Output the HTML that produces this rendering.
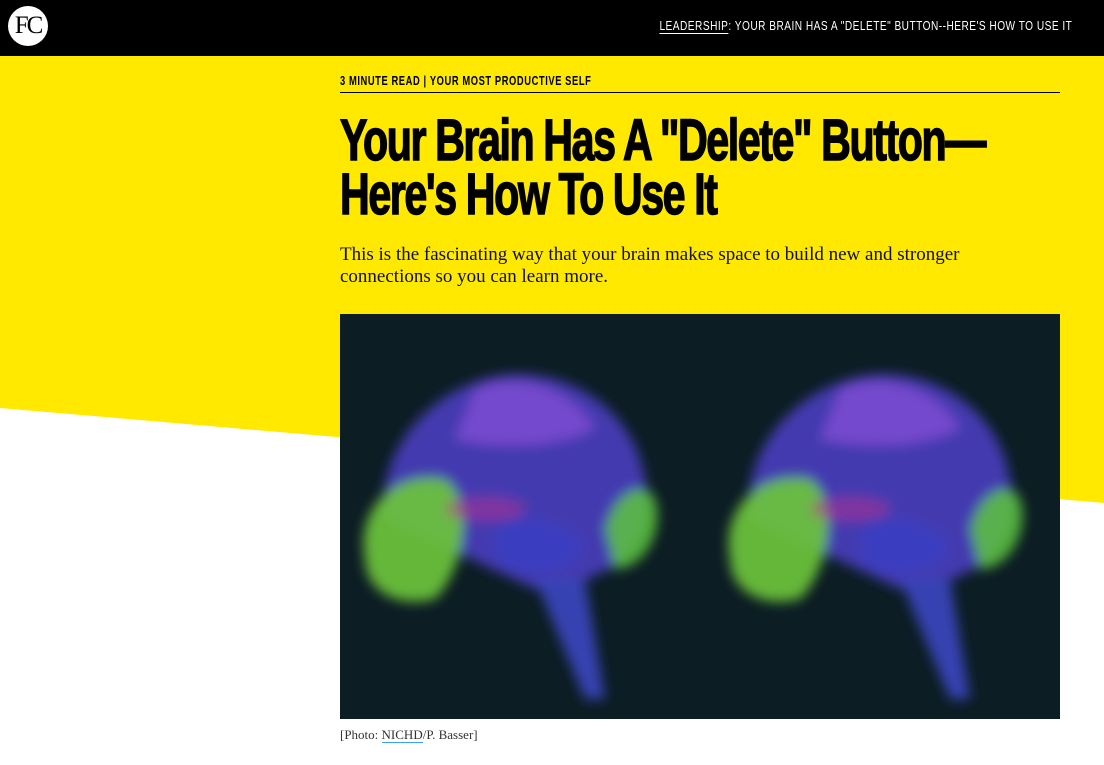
<!DOCTYPE html>
<html><head><meta charset="utf-8"><style>
body{margin:0;width:1104px;height:765px;position:relative;overflow:hidden;background:#fff;font-family:"Liberation Sans",sans-serif}
.top{position:absolute;left:0;top:0;width:1104px;height:56px;background:#000}
.logo{position:absolute;left:8px;top:6px;width:40px;height:40px;border-radius:50%;background:#fff;color:#000;font-family:"Liberation Serif",serif;font-size:25px;line-height:40px;text-align:center;letter-spacing:-2px}
.nav{position:absolute;right:32px;top:18px;color:#fff;font-size:13px;letter-spacing:.6px;transform:scaleX(.78);transform-origin:right top;white-space:nowrap}
.nav u{text-underline-offset:3px}
.yellow{position:absolute;left:0;top:56px;width:1104px;height:460px;background:#ffe900;clip-path:polygon(0 0,100% 0,100% 447px,0 352px)}
.kick{position:absolute;left:340px;top:73px;width:720px;height:19px;border-bottom:1px solid #000;font-size:13px;font-weight:bold;letter-spacing:.8px}
.kick span{display:inline-block;transform:scaleX(.72);transform-origin:left top;white-space:nowrap}
h1{position:absolute;left:340px;top:114px;margin:0;font-size:58px;line-height:54px;font-weight:bold;letter-spacing:-2px;transform:scaleX(.71);transform-origin:left top;white-space:nowrap;-webkit-text-stroke:1.5px #000}
.dek{position:absolute;left:340px;top:244px;font-family:"Liberation Serif",serif;font-size:19px;line-height:22px;color:#111;width:700px}
.img{position:absolute;left:340px;top:314px;width:720px;height:405px;background:#0c1d24;overflow:hidden}
.cap{position:absolute;left:340px;top:727px;font-family:"Liberation Serif",serif;font-size:13px;color:#333}
.cap a{color:#333;text-decoration:none;border-bottom:1px solid #3aa0ff}
</style></head><body>
<div class="top"><div class="logo">FC</div><div class="nav"><u>LEADERSHIP</u>: YOUR BRAIN HAS A "DELETE" BUTTON--HERE'S HOW TO USE IT</div></div>
<div class="yellow"></div>
<div class="kick"><span>3 MINUTE READ&nbsp;|&nbsp;YOUR MOST PRODUCTIVE SELF</span></div>
<h1>Your Brain Has A "Delete" Button—<br>Here's How To Use It</h1>
<div class="dek">This is the fascinating way that your brain makes space to build new and stronger connections so you can learn more.</div>
<div class="img"><svg width="720" height="405">
<defs>
<filter id="f"><feGaussianBlur stdDeviation="6"/></filter>
<g id="b" filter="url(#f)">
<path d="M-130 30 C-140 -40 -80 -110 0 -115 C70 -115 120 -70 130 -10 C140 40 110 80 70 90 L20 100 Z" fill="#4c3ec8" opacity=".85"/>
<path d="M-40 -100 C0 -120 60 -100 80 -60 C40 -40 -20 -40 -60 -50Z" fill="#8a50d8" opacity=".7"/>
<path d="M-150 70 C-160 20 -120 -20 -70 -10 C-40 10 -50 80 -80 110 C-120 120 -150 100 -150 70Z" fill="#6ec83a" opacity=".9"/>
<path d="M90 40 C100 0 130 -10 140 10 C150 40 130 80 100 80Z" fill="#5ec640" opacity=".85"/>
<path d="M-20 40 C0 20 60 30 70 60 C50 90 0 90 -20 70Z" fill="#3a3cc0"/>
<path d="M20 90 L70 210 L90 210 L70 90Z" fill="#3a46c0" opacity=".9"/>
<ellipse cx="-30" cy="20" rx="40" ry="12" fill="#c03090" opacity=".5"/>
</g></defs>
<use href="#b" transform="translate(175,175)"/>
<use href="#b" transform="translate(540,175)"/>
</svg></div>
<div class="cap">[Photo: <a>NICHD</a>/P. Basser]</div>
</body></html>
